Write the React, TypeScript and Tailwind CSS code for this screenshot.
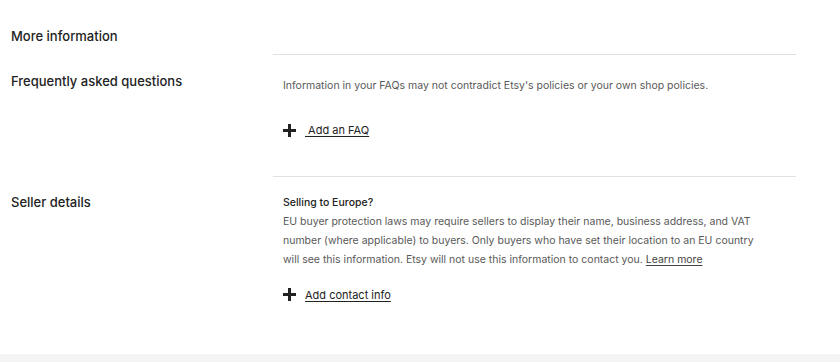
function Plus() {
  return (
    <svg width="13" height="13" viewBox="0 0 13 13" className="shrink-0">
      <rect x="5" y="0" width="3" height="13" fill="#222222" />
      <rect x="0" y="5" width="13" height="3" fill="#222222" />
    </svg>
  );
}

function AddLink({ label, lead }: { label: string; lead?: boolean }) {
  return (
    <div className="flex items-center gap-[9px] text-[11px] text-[#222222]">
      <Plus />
      <span className="underline underline-offset-2 whitespace-pre">{lead ? " " + label : label}</span>
    </div>
  );
}

export default function App() {
  return (
    <div className="bg-white" style={{ fontFamily: "Inter, 'Noto Sans', sans-serif" }}>
      <div className="px-[11px]">
        {/* More information */}
        <div className="flex h-[54px]">
          <div className="w-[262px] pt-[27px] text-[13px] leading-[18px] font-medium text-[#222222]">More information</div>
        </div>

        {/* FAQ */}
        <div className="flex">
          <div className="w-[262px] pt-[18px] text-[13px] leading-[18px] font-medium text-[#222222]">Frequently asked questions</div>
          <div className="w-[523px] border-t border-[#e1e1e1] px-[10px] pt-[21px] pb-[37px]">
            <p className="text-[10.5px] leading-[19px] text-[#595959]">
              Information in your FAQs may not contradict Etsy's policies or your own shop policies.
            </p>
            <div className="mt-[27px]">
              <AddLink label="Add an FAQ" lead />
            </div>
          </div>
        </div>

        {/* Seller details */}
        <div className="flex">
          <div className="w-[262px] pt-[17px] text-[13px] leading-[18px] font-medium text-[#222222]">Seller details</div>
          <div className="w-[523px] border-t border-[#e1e1e1] px-[10px] pt-[16px] pb-[51px]">
            <p className="text-[10.5px] leading-[19px] font-medium text-[#222222]">Selling to Europe?</p>
            <p className="text-[10.5px] leading-[19px] text-[#595959]">
              EU buyer protection laws may require sellers to display their name, business address, and VAT
              <br />
              number (where applicable) to buyers. Only buyers who have set their location to an EU country
              <br />
              will see this information. Etsy will not use this information to contact you.{" "}
              <span className="underline underline-offset-2 text-[#444444]">Learn more</span>
            </p>
            <div className="mt-[18px]">
              <AddLink label="Add contact info" />
            </div>
          </div>
        </div>
      </div>
      <div className="h-[40px] bg-[#f4f4f4]" />
    </div>
  );
}
